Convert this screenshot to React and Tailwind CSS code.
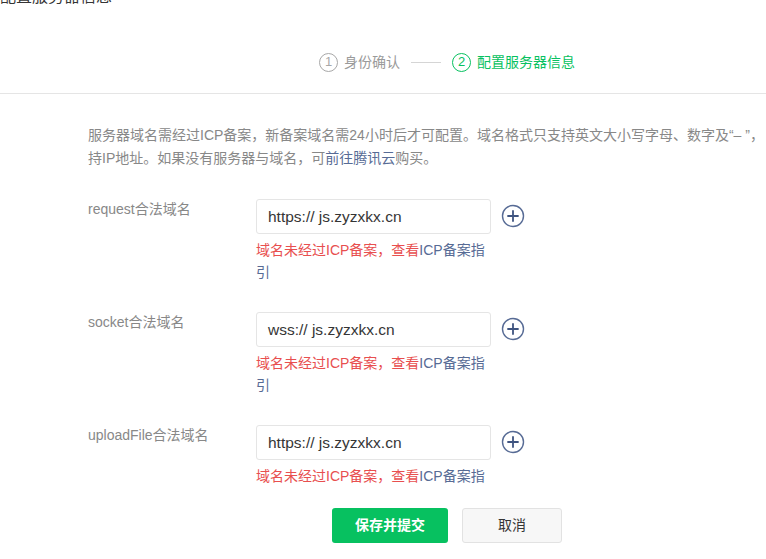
import React from 'react';

const font = { fontFamily: '"Liberation Sans", "Noto Sans CJK SC", sans-serif' };

function PlusCircle() {
  return (
    <svg width="24" height="24" viewBox="0 0 24 24" fill="none" className="shrink-0">
      <circle cx="12" cy="12" r="10.5" stroke="#576b95" strokeWidth="1.4" />
      <path d="M12 7v10M7 12h10" stroke="#3f5480" strokeWidth="1.8" strokeLinecap="round" />
    </svg>
  );
}

function DomainRow({ label, value }) {
  return (
    <div className="flex items-start mb-[29px]">
      <div className="w-[168px] shrink-0 text-[14px] leading-5 text-[#888]">{label}</div>
      <div className="w-[235px] shrink-0">
        <div className="h-[35px] border border-[#e5e5e5] rounded-[3px] px-[11px] flex items-center text-[15.5px] text-[#353535]">
          {value}
        </div>
        <p className="mt-[5px] text-[14px] leading-[22px] text-[#e84f4f]">
          域名未经过ICP备案，查看<span className="text-[#576b95]">ICP备案指引</span>
        </p>
      </div>
      <div className="ml-[10px] mt-[5px]">
        <PlusCircle />
      </div>
    </div>
  );
}

export default function App() {
  return (
    <div className="w-[766px] h-[559px] overflow-hidden bg-white" style={font}>
      <div className="w-[894px] h-full flex flex-col">
        <main className="flex-1 overflow-hidden">
          {/* Header */}
          <h2 className="-mt-[15px] text-[16px] leading-6 text-[#353535]">配置服务器信息</h2>

          <div className="mt-[41px] h-6 flex items-center justify-center text-[14px]">
            <span className="w-[19px] h-[19px] rounded-full border border-[#a8a8a8] text-[#a8a8a8] text-[13px] flex items-center justify-center">1</span>
            <span className="ml-[6px] text-[#9a9a9a]">身份确认</span>
            <span className="mx-[11px] w-[30px] h-px bg-[#d5d5d5]" />
            <span className="w-[19px] h-[19px] rounded-full border border-[#07c160] text-[#07c160] text-[13px] flex items-center justify-center">2</span>
            <span className="ml-[6px] text-[#07c160]">配置服务器信息</span>
          </div>

          <div className="mt-[19px] border-b border-[#e5e5e5] w-[766px]" />

          {/* Notice */}
          <div className="pt-[30px] pl-[88px] text-[14px] leading-[23px] text-[#888]">
            <p className="whitespace-nowrap">服务器域名需经过ICP备案，新备案域名需24小时后才可配置。域名格式只支持英文大小写字母、数字及“– ”，&nbsp;不支</p>
            <p className="whitespace-nowrap">
              持IP地址。如果没有服务器与域名，可<span className="text-[#576b95]">前往腾讯云</span>购买。
            </p>
          </div>

          {/* Form */}
          <div className="mt-[29px] pl-[88px]">
            <DomainRow label="request合法域名" value="https:// js.zyzxkx.cn" />
            <DomainRow label="socket合法域名" value="wss:// js.zyzxkx.cn" />
            <DomainRow label="uploadFile合法域名" value="https:// js.zyzxkx.cn" />
          </div>
        </main>

        <footer className="h-[71px] shrink-0 bg-white pt-5 flex justify-center gap-[14px]">
          <button className="w-[116px] h-[35px] rounded-[3px] bg-[#07c160] text-white text-[14px] font-bold">保存并提交</button>
          <button className="w-[100px] h-[35px] rounded-[3px] border border-[#e2e2e2] bg-[#f7f7f7] text-[#353535] text-[14px]">取消</button>
        </footer>
      </div>
    </div>
  );
}
